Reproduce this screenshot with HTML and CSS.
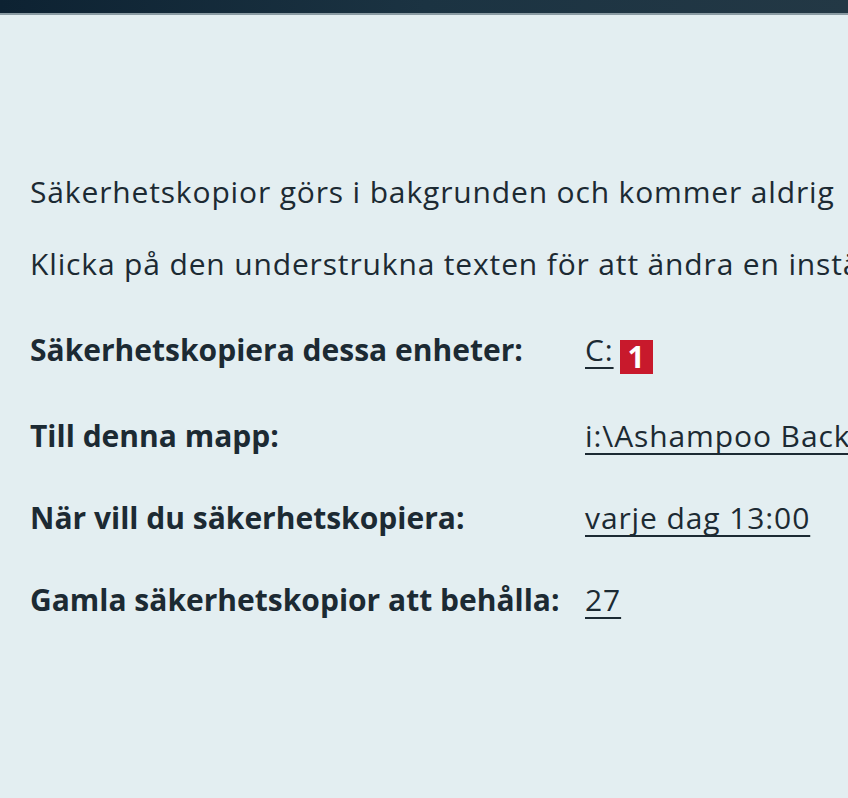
FILE: index.html
```html
<!DOCTYPE html>
<html>
<head>
    <title>Säkerhetskopiering</title>
    <link rel="stylesheet" href="styles.css">
</head>
<body>
    <header class="topbar"></header>
    <main class="content">
        <p class="intro">Säkerhetskopior görs i bakgrunden och kommer aldrig</p>
        <p class="intro">Klicka på den understrukna texten för att ändra en inställning.</p>

        <div class="settings">
            <div class="label">Säkerhetskopiera dessa enheter:</div>
            <div class="value"><a href="#">C:</a><span class="badge">1</span></div>

            <div class="label">Till denna mapp:</div>
            <div class="value"><a href="#">i:\Ashampoo Backup</a></div>

            <div class="label">När vill du säkerhetskopiera:</div>
            <div class="value"><a href="#">varje dag 13:00</a></div>

            <div class="label">Gamla säkerhetskopior att behålla:</div>
            <div class="value"><a href="#">27</a></div>
        </div>
    </main>
</body>
</html>
```

FILE: styles.css
```css
body {
    margin: 0;
    padding: 0;
    background-color: #e3eef1;
    color: #1c2a33;
    font-family: "Open Sans", "Noto Sans", sans-serif;
    overflow: hidden;
    white-space: nowrap;
}

.topbar {
    height: 13px;
    background: linear-gradient(to right, #0d2232, #1b3342 50%, #233845);
    border-bottom: 2px solid #8a9ba3;
}

.content {
    padding: 157px 0 0 30px;
}

.intro {
    margin: 0 0 32px;
    font-size: 30px;
    line-height: 40px;
    letter-spacing: 0.85px;
}

.settings {
    display: grid;
    grid-template-columns: 555px auto;
    row-gap: 42px;
    margin-top: 46px;
    font-size: 30px;
    line-height: 40px;
}

.label {
    font-weight: bold;
}

.value a {
    color: #1c2a33;
    letter-spacing: 0.9px;
    text-decoration: underline;
    text-decoration-thickness: 2px;
    text-decoration-skip-ink: none;
    text-underline-offset: 6px;
}

.badge {
    display: inline-block;
    margin-left: 6px;
    width: 33px;
    height: 34px;
    line-height: 34px;
    background-color: #c8192c;
    color: #fff;
    font-weight: bold;
    font-size: 30px;
    text-align: center;
    vertical-align: -7px;
}
```
